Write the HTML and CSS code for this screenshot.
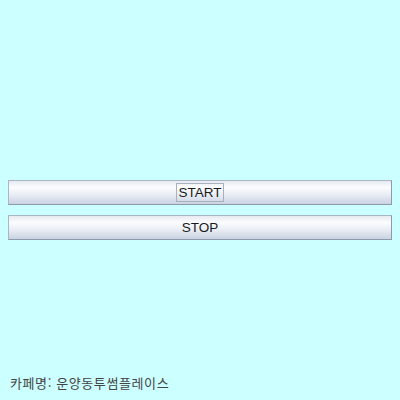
FILE: index.html
```html
<!DOCTYPE html>
<html lang="ko">
<head>
<meta charset="utf-8">
<link rel="stylesheet" href="styles.css">
</head>
<body>
<div class="page">
  <div class="controls">
    <button class="btn" type="button"><span class="label focus">START</span></button>
    <button class="btn" type="button"><span class="label">STOP</span></button>
  </div>
  <p class="cafe">카페명: 운양동투썸플레이스</p>
</div>
</body>
</html>
```
FILE: styles.css
```css
html, body {
  margin: 0;
  padding: 0;
  background: #ccffff;
}
.page {
  box-sizing: border-box;
  height: 400px;
  padding: 0 8px 8px;
  display: flex;
  flex-direction: column;
}
.controls {
  margin-top: 180px;
  display: flex;
  flex-direction: column;
  gap: 10px;
}
.btn {
  box-sizing: border-box;
  width: 100%;
  height: 25px;
  margin: 0;
  padding: 0;
  border: 1px solid #a9b7c4;
  border-right-color: #8d9aa8;
  border-bottom-color: #8d9aa8;
  border-radius: 0;
  background: linear-gradient(to bottom, #e6eaf0 0%, #fbfcfe 28%, #e9edf4 60%, #c9d3e3 100%);
  font-family: "Liberation Sans", Arial, sans-serif;
  font-size: 13.5px;
  color: #1a1a1a;
  display: flex;
  align-items: center;
  justify-content: center;
}
.label {
  display: inline-block;
  padding: 1px 1px;
  border: 1px solid transparent;
  line-height: 15px;
}
.label.focus {
  border-color: #a7b0bb;
}
.cafe {
  margin: auto 0 0;
  font-family: "Noto Sans CJK KR", "Noto Sans", sans-serif;
  font-size: 13px;
  letter-spacing: 0.6px;
  line-height: 18px;
  color: #444444;
  padding-left: 2px;
}
```
